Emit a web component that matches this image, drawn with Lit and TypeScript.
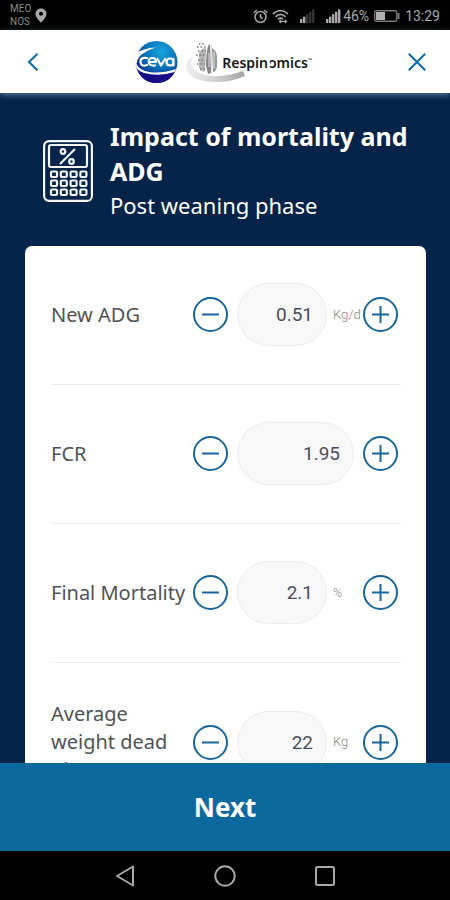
import { LitElement, html, css, svg, nothing } from "lit";
import { customElement, property, state } from "lit/decorators.js";

interface Field {
  id: string;
  label: string;
  value: string;
  step: number;
  unit?: string;
}

@customElement("status-bar")
class StatusBar extends LitElement {
  static styles = css`
    :host {
      display: flex;
      align-items: center;
      height: 30px;
      padding: 0 10px;
      background: #000;
      color: #a9a9a9;
      font: 14px/20px Roboto, sans-serif;
    }
    .carrier {
      font-size: 10px;
      line-height: 13px;
      color: #8c8c8c;
    }
    .pin { margin-left: 4px; }
    .right {
      display: flex;
      align-items: center;
      margin-left: auto;
      padding-top: 2px;
    }
    .wifi { margin-left: 4px; }
    .weak { margin-left: 11px; }
    .strong { margin: 0 2px 0 11px; }
    .battery { margin: 0 5px; }
    svg { display: block; }
  `;

  private bars(lit: number) {
    return [0, 1, 2, 3, 4].map(
      (i) => svg`<rect x=${i * 3} y=${10 - i * 2.4} width="2.4" height=${4 + i * 2.4} fill=${i < lit ? "#a9a9a9" : "#333"} />`
    );
  }

  render() {
    return html`
      <div class="carrier">MEO<br />NOS</div>
      <svg class="pin" width="12" height="15" viewBox="0 0 12 15">
        <path fill="#a9a9a9" fill-rule="evenodd" d="M6 0.500C2.900 0.500 0.500 2.900 0.500 5.900C0.500 9.500 6 14.500 6 14.500S11.500 9.500 11.500 5.900C11.500 2.900 9.100 0.500 6 0.500ZM6 3.800A2 2 0 1 1 6 7.800A2 2 0 0 1 6 3.800Z" />
      </svg>
      <div class="right">
        <svg width="15" height="15" viewBox="0 0 15 15" fill="none" stroke="#a9a9a9" stroke-width="1.500">
          <circle cx="7.500" cy="8" r="5.500" />
          <path d="M7.500 5v3.300l2.300 1.300M0.800 3.800L4 1M14.200 3.800L11 1" />
        </svg>
        <svg class="wifi" width="17" height="15" viewBox="0 0 17 15" fill="none" stroke="#a9a9a9" stroke-width="1.600">
          <path d="M1 5Q8.500 -2 16 5M3.500 7.800Q8.500 3 13.500 7.800M6 10.300Q8.500 8 11 10.300" />
          <path stroke-width="1.200" d="M8 12.500h6M9 11l-1.500 1.500L9 14M13 11l1.500 1.500L13 14" />
        </svg>
        <svg class="weak" width="15" height="14" viewBox="0 0 15 14">${this.bars(2)}</svg>
        <svg class="strong" width="15" height="14" viewBox="0 0 15 14">${this.bars(5)}</svg>
        <span>46%</span>
        <svg class="battery" width="26" height="12" viewBox="0 0 26 12">
          <rect x="0.700" y="0.700" width="22" height="10.600" rx="1.500" fill="none" stroke="#777" stroke-width="1.400" />
          <rect x="2" y="2" width="9" height="8" fill="#b0b0b0" />
          <rect x="23.500" y="3" width="2" height="6" fill="#777" />
        </svg>
        <span>13:29</span>
      </div>
    `;
  }
}

@customElement("app-header")
class AppHeader extends LitElement {
  static styles = css`
    :host {
      display: grid;
      grid-template-columns: 66px 1fr 66px;
      align-items: center;
      height: 63px;
      background: #fff;
      position: relative;
      z-index: 1;
      box-shadow: 0 2px 6px rgba(150, 190, 220, 0.55);
    }
    button {
      display: flex;
      align-items: center;
      justify-content: center;
      height: 63px;
      padding: 0;
      border: 0;
      background: none;
      cursor: pointer;
    }
    .logos {
      display: flex;
      align-items: center;
      justify-content: center;
    }
    .respinomics {
      position: relative;
      display: flex;
      align-items: center;
      height: 46px;
      margin-left: 7px;
      padding-left: 37px;
    }
    .mark {
      position: absolute;
      left: 0;
      top: 0;
    }
    .name {
      position: relative;
      padding-right: 3px;
      color: #161616;
      font: 600 14px/20px "Noto Sans", sans-serif;
    }
    .open {
      display: inline-block;
      clip-path: polygon(0 66%, 40% 66%, 40% 54%, 22% 54%, 22% 0, 100% 0, 100% 100%, 0 100%);
    }
    .tm { font-size: 5px; vertical-align: 6px; }
    svg { display: block; }
  `;

  render() {
    return html`
      <button aria-label="Back">
        <svg width="12" height="20" viewBox="0 0 12 20" fill="none" stroke="#0c69a4" stroke-width="2">
          <path d="M10.500 1.800L2 10l8.500 8.200" />
        </svg>
      </button>
      <div class="logos">
        <svg width="43" height="44" viewBox="0 0 43 44" role="img" aria-label="Ceva">
          <defs>
            <radialGradient id="globe" cx="0.620" cy="0.250" r="0.700">
              <stop offset="0" stop-color="#19a5dc" />
              <stop offset="0.550" stop-color="#0872ba" />
              <stop offset="1" stop-color="#102b8c" />
            </radialGradient>
          </defs>
          <circle cx="21.500" cy="22" r="21" fill="url(#globe)" />
          <path fill="#150c86" d="M3 31Q20 38 40 31Q35 43 21.500 43Q8 43 3 31Z" />
          <path fill="#fff" d="M0 14Q8 8 21 7.500Q10 11 5 16Q2 19 1.500 24Q4 30 14 32Q26 34 41 29L39.500 32Q24 37 9 33Q0 30 0 22Z" />
          <g fill="none" stroke="#fff" stroke-width="2.200" stroke-linecap="round" stroke-linejoin="round">
            <path d="M12 18Q5 17 5.500 22Q6 27 12 25" />
            <path d="M14 22H21Q21 18 17.500 18Q13.500 18 13.800 22Q14 26 20 25.500" />
            <path d="M22.500 19L26 25.500L30 19" />
            <path d="M38.500 19V25.500M38.500 22Q38.500 18.500 35 18.500Q31.500 18.500 31.500 22Q31.500 25.500 35 25.500Q38.500 25.500 38.500 22" />
          </g>
        </svg>
        <div class="respinomics">
          <svg class="mark" width="64" height="46" viewBox="0 0 64 46" aria-hidden="true">
            <defs>
              <linearGradient id="swoosh">
                <stop offset="0" stop-color="#f0f0f0" />
                <stop offset="0.500" stop-color="#d2d2d2" />
                <stop offset="1" stop-color="#a2a2a2" />
              </linearGradient>
            </defs>
            <path fill="url(#swoosh)" d="M8 17Q0 22 1 29Q4 43 32 43Q46 43 60 37L58 32Q42 38 26 37Q11 35 7 28Q5 23 8 17Z" />
            <path fill="#858585" d="M23 7L25 5L26 34L23 35L21 27Q21 15 23 7Z" />
            <path fill="#999" d="M27 9Q32 12 32 18L32 28Q31 33 28 33Z" />
            <path fill="#b5b5b5" d="M14 14Q17 9 21 9L20 32Q16 34 14 28Z" />
            <path stroke="#777" stroke-width="1.500" stroke-dasharray="1.500 2" d="M12 8H22M13 12H21M11 16H20M13 21H20M12 25H20M15 30H21M14 5H20" />
            <path stroke="#ddd" d="M26.500 6V34M29 13V29M24 14V28" />
          </svg>
          <span class="name">Respin<span class="open">o</span>mics<span class="tm">™</span></span>
        </div>
      </div>
      <button aria-label="Close">
        <svg width="20" height="20" viewBox="0 0 20 20" fill="none" stroke="#0c69a4" stroke-width="2">
          <path d="M1.800 1.800L18.200 18.200M18.200 1.800L1.800 18.200" />
        </svg>
      </button>
    `;
  }
}

@customElement("stepper-row")
class StepperRow extends LitElement {
  @property({ attribute: false }) field!: Field;
  @state() private current?: string;

  static styles = css`
    :host {
      display: grid;
      grid-template-columns: minmax(0, 1fr) 35px 117px 35px;
      align-items: center;
      padding: 37px 3px 38px 0;
      border-bottom: 1px solid #e9e9e9;
      font-family: "Noto Sans", sans-serif;
    }
    label {
      padding-right: 4px;
      color: #505356;
      font-size: 20px;
      line-height: 28px;
    }
    button {
      width: 35px;
      height: 35px;
      padding: 0;
      border: 0;
      border-radius: 50%;
      background: none;
      cursor: pointer;
    }
    svg { display: block; }
    :host { grid-template-columns: minmax(0, 1fr) 35px 135px 35px; }
    .entry {
      display: flex;
      align-items: center;
      min-width: 0;
      padding: 0 9px;
    }
    input {
      box-sizing: border-box;
      flex: 1;
      min-width: 0;
      height: 63px;
      padding: 0 13px;
      border: 1px solid #ececec;
      border-radius: 32px;
      background: #f8f8f8;
      color: #4a4e60;
      font: 19px Roboto, sans-serif;
      text-align: right;
    }
    .unit {
      box-sizing: border-box;
      width: 27px;
      padding-left: 6px;
      color: #858585;
      font: 300 13px/20px Roboto, sans-serif;
      white-space: nowrap;
    }
    .small { font-size: 12px; }
  `;

  private shift(sign: number) {
    const now = this.current ?? this.field.value;
    const digits = (this.field.value.split(".")[1] ?? "").length;
    this.current = (Number(now) + sign * this.field.step).toFixed(digits);
  }

  private icon(plus: boolean) {
    return html`<svg width="35" height="35" viewBox="0 0 35 35" fill="none" stroke="#1a6699" stroke-width="2">
      <circle cx="17.500" cy="17.500" r="16.500" />
      <path d="M9 17.500H26" />
      ${plus ? svg`<path d="M17.500 9V26" />` : nothing}
    </svg>`;
  }

  render() {
    const { id, label, value, unit } = this.field;
    return html`
      <label for=${id}>${label}</label>
      <button aria-label="Decrease ${label}" @click=${() => this.shift(-1)}>${this.icon(false)}</button>
      <div class="entry">
        <input id=${id} inputmode="decimal" .value=${this.current ?? value} />
        ${unit ? html`<span class="unit ${unit === "%" ? "small" : ""}">${unit}</span>` : nothing}
      </div>
      <button aria-label="Increase ${label}" @click=${() => this.shift(1)}>${this.icon(true)}</button>
    `;
  }
}

@customElement("app-root")
class AppRoot extends LitElement {
  static styles = css`
    :host {
      display: flex;
      flex-direction: column;
      height: 100vh;
      background: #06244a;
      font-family: "Noto Sans", sans-serif;
    }
    status-bar, app-header, .next, .nav { flex: none; }
    main {
      flex: 1;
      min-height: 0;
      overflow: hidden;
      padding: 26px 24px 0 25px;
    }
    .intro {
      display: flex;
      align-items: center;
      gap: 17px;
      padding: 0 0 24px 18px;
      color: #fff;
    }
    .intro svg { flex: none; }
    h1 {
      margin: 0;
      font-size: 25px;
      font-weight: 700;
      line-height: 35px;
    }
    p {
      margin: 0;
      font-size: 22px;
      line-height: 33px;
    }
    .card {
      padding: 0 25px 0 26px;
      border-radius: 7px;
      background: #fff;
    }
    .next {
      height: 88px;
      padding: 0;
      border: 0;
      background: #0c699e;
      color: #fff;
      font: 700 26px/36px "Noto Sans", sans-serif;
      cursor: pointer;
    }
    .nav {
      display: flex;
      justify-content: center;
      gap: 56px;
      height: 49px;
      background: #000;
    }
    .nav button {
      display: flex;
      align-items: center;
      justify-content: center;
      width: 44px;
      padding: 0;
      border: 0;
      background: none;
    }
  `;

  private fields: Field[] = [
    { id: "adg", label: "New ADG", value: "0.51", step: 0.01, unit: "Kg/d" },
    { id: "fcr", label: "FCR", value: "1.95", step: 0.01 },
    { id: "mortality", label: "Final Mortality", value: "2.1", step: 0.1, unit: "%" },
    { id: "dead-weight", label: "Average weight dead pigs", value: "22", step: 1, unit: "Kg" },
  ];

  private keys() {
    return [0, 1, 2].map((r) =>
      [0, 1, 2, 3].map((c) => svg`<rect x=${8 + c * 9.8} y=${31.5 + r * 9} width="6" height="5.500" rx="1" />`)
    );
  }

  render() {
    return html`
      <status-bar></status-bar>
      <app-header></app-header>
      <main>
        <div class="intro">
          <svg width="50" height="62" viewBox="0 0 50 62" fill="none" stroke="#f2f5fa" stroke-width="2.200">
            <rect x="1.100" y="1.100" width="47.800" height="59.800" rx="5" />
            <rect x="6" y="5" width="38" height="22" rx="2" />
            <path d="M17 24L32 9" />
            <circle cx="20" cy="11.500" r="2.300" />
            <circle cx="28.500" cy="21.500" r="2.300" />
            ${this.keys()}
          </svg>
          <div>
            <h1>Impact of mortality and ADG</h1>
            <p>Post weaning phase</p>
          </div>
        </div>
        <div class="card">
          ${this.fields.map((field) => html`<stepper-row .field=${field}></stepper-row>`)}
        </div>
      </main>
      <button class="next">Next</button>
      <nav class="nav">
        <button aria-label="Back">
          <svg width="20" height="22" viewBox="0 0 20 22" fill="none" stroke="#a8a8a8" stroke-width="2" stroke-linejoin="round">
            <path d="M18 1.500V20.500L2 11Z" />
          </svg>
        </button>
        <button aria-label="Home">
          <svg width="22" height="22" viewBox="0 0 22 22" fill="none" stroke="#a8a8a8" stroke-width="2">
            <circle cx="11" cy="11" r="9.700" />
          </svg>
        </button>
        <button aria-label="Recent apps">
          <svg width="20" height="20" viewBox="0 0 20 20" fill="none" stroke="#a8a8a8" stroke-width="2">
            <rect x="1" y="1" width="18" height="18" rx="1.500" />
          </svg>
        </button>
      </nav>
    `;
  }
}
